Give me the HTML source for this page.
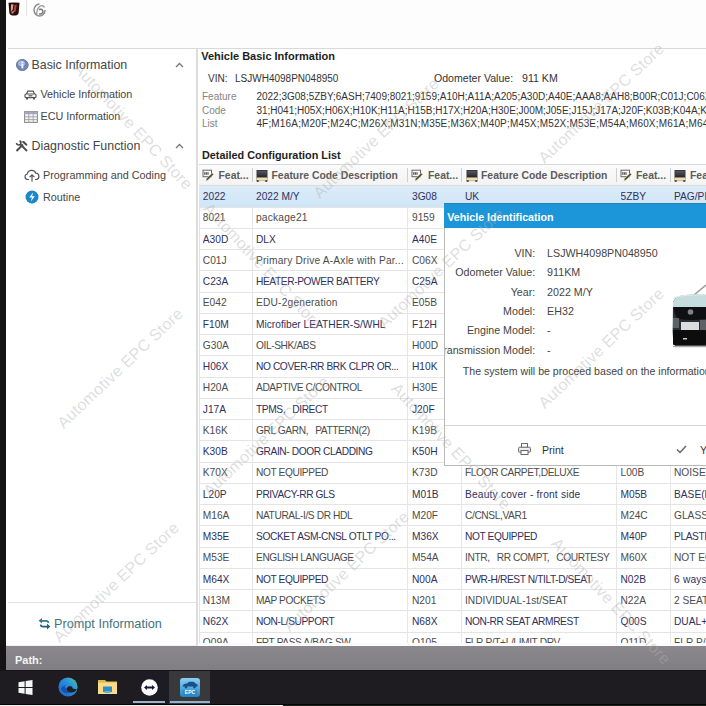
<!DOCTYPE html>
<html><head><meta charset="utf-8"><style>
html,body{margin:0;padding:0;}
body{width:706px;height:706px;position:relative;overflow:hidden;background:#fff;font-family:"Liberation Sans", sans-serif;}
.t{position:absolute;white-space:nowrap;}
</style></head><body>
<div style="position:absolute;left:0px;top:0px;width:6px;height:671px;background:#141414"></div>
<div style="position:absolute;left:6px;top:0px;width:700px;height:48.3px;background:#fdfdfd"></div>
<div style="position:absolute;left:8px;top:48px;width:698px;height:1px;background:#d9d9d9"></div>
<div style="position:absolute;left:6px;top:49px;width:191px;height:597px;background:#fff"></div>
<div style="position:absolute;left:196px;top:49px;width:2.2px;height:597px;background:#dcdcdc"></div>
<div style="position:absolute;left:199px;top:164px;width:1px;height:481px;background:#e2e2e2"></div>
<div style="position:absolute;left:6px;top:646px;width:700px;height:25px;background:linear-gradient(#8a888c,#848286 60%,#807e82)"></div>
<div style="position:absolute;left:6px;top:670px;width:700px;height:1.5px;background:#151416"></div>
<div style="position:absolute;left:6px;top:645px;width:191px;height:0.8px;background:#eee"></div>
<div class="t" style="left:15.00px;top:654.99px;font-size:11px;line-height:11px;color:#f4f4f4;font-weight:700;">Path:</div>
<div style="position:absolute;left:0px;top:670.8px;width:706px;height:32.8px;background:#1e1c20"></div>
<div style="position:absolute;left:0px;top:703.5px;width:706px;height:1px;background:#050505"></div>
<div style="position:absolute;left:0px;top:704.5px;width:283px;height:1.5px;background:#f2f2f2"></div>
<div style="position:absolute;left:283px;top:704.5px;width:423px;height:1.5px;background:#1b241e"></div>
<svg style="position:absolute;left:18px;top:679.5px" width="15" height="15" viewBox="0 0 15 15"><path d="M0.5 2.2 L6.6 1.3 V7 H0.5Z M7.6 1.1 L14.5 0.1 V7 H7.6Z M0.5 8 H6.6 V13.7 L0.5 12.8Z M7.6 8 H14.5 V14.9 L7.6 13.9Z" fill="#f6f6f6"/></svg>
<svg style="position:absolute;left:57.5px;top:676.8px" width="20" height="20" viewBox="0 0 20 20"><defs><linearGradient id="eg" x1="0" y1="1" x2="1" y2="0"><stop offset="0" stop-color="#1f5fc8"/><stop offset="0.6" stop-color="#2a8fe0"/><stop offset="1" stop-color="#4fd08a"/></linearGradient></defs><circle cx="10" cy="10" r="9.6" fill="url(#eg)"/><path d="M19 12 Q17 16 12.5 15.5 Q8.5 15 8.8 11.5 Q9.2 9 12 9 Q14.5 9.2 14.8 11.5 Q17 12.5 19 12Z" fill="#1f1e21"/><path d="M8.8 11.5 Q8.5 15 12.5 15.5 Q6 18 3 12 Q4 8.5 8 8.2 Q5 9.5 8.8 11.5Z" fill="#103a8a" opacity="0.6"/></svg>
<svg style="position:absolute;left:98.3px;top:679.3px" width="19" height="15" viewBox="0 0 19 15"><path d="M0 1 H7 L8.5 2.5 H19 V15 H0Z" fill="#e0b94c"/><rect x="0" y="3.5" width="19" height="11.5" fill="#f7dc8a"/><rect x="5" y="7.5" width="9" height="5.5" fill="#2f8fc4"/><rect x="6.5" y="12" width="6" height="2" fill="#5db2e0"/></svg>
<div style="position:absolute;left:136.5px;top:671px;width:32px;height:30.5px;background:#1d1c24"></div>
<svg style="position:absolute;left:140.5px;top:679px" width="17" height="17" viewBox="0 0 17 17"><circle cx="8.5" cy="8.5" r="8.3" fill="#fafafa"/><path d="M3 8.5 L6 6 V7.6 H11 V6 L14 8.5 L11 11 V9.4 H6 V11Z" fill="#141a3a"/></svg>
<div style="position:absolute;left:169px;top:671px;width:41.2px;height:32.5px;background:#39393b"></div>
<svg style="position:absolute;left:179.8px;top:677.6px" width="20" height="19" viewBox="0 0 20 19"><defs><linearGradient id="ag" x1="0" y1="0" x2="0" y2="1"><stop offset="0" stop-color="#8fd0f0"/><stop offset="1" stop-color="#1c86c8"/></linearGradient></defs><rect x="0" y="0" width="20" height="19" rx="3" fill="url(#ag)"/><path d="M2.5 8.5 Q3 5.5 7 5.5 L9 3.8 H13.5 L16 5.8 Q18 6 17.8 8.5Z" fill="#1a4f8a"/><circle cx="6" cy="9" r="1.4" fill="#1a4f8a"/><circle cx="14.5" cy="9" r="1.4" fill="#1a4f8a"/><rect x="3" y="12" width="14" height="4.5" fill="#2f7fc0" opacity="0.7"/><text x="10" y="16.2" font-size="5" text-anchor="middle" fill="#fff" font-family="Liberation Sans" font-weight="700">EPC</text></svg>
<div style="position:absolute;left:133px;top:701.4px;width:32px;height:1.7px;background:#9eb3c8"></div>
<div style="position:absolute;left:170px;top:701.4px;width:40px;height:1.7px;background:#92b2cf"></div>
<svg style="position:absolute;left:8px;top:1.5px" width="12" height="14" viewBox="0 0 12 14"><path d="M0.5 0.8 Q6 0 11.5 0.8 L10.6 11 Q10 13.6 6 13.6 Q2 13.6 1.4 11 Z" fill="#2a0907"/><path d="M3 2.5 L5.5 2.2 L4.6 8 L2.8 9.5Z" fill="#d9a89a"/><path d="M6.5 3 L8.8 2.6 L7.6 9.6 L5.2 11Z" fill="#9a4a3c"/><path d="M3.2 9.8 L6 8.8 L5.4 11.2 L3.6 11.8Z" fill="#c48878"/></svg>
<div style="position:absolute;left:26px;top:0px;width:1px;height:16px;background:#e2e2e2"></div>
<svg style="position:absolute;left:33px;top:2.5px" width="13" height="14" viewBox="0 0 13 14"><path d="M6.5 1 A5.5 6 0 1 0 12 7" fill="none" stroke="#8d8d8d" stroke-width="1.5"/><path d="M4 12 Q3 7 6.5 3.5 Q10 1.5 11.5 4.5" fill="none" stroke="#9a9a9a" stroke-width="1.3"/><path d="M6 6.5 Q9.5 5.5 10 8.5 Q9.5 11.5 6 11" fill="none" stroke="#777" stroke-width="1.4"/></svg>
<svg style="position:absolute;left:15.5px;top:58.8px" width="13" height="12" viewBox="0 0 13 12"><ellipse cx="6.3" cy="6" rx="5.9" ry="5.6" fill="#7088b8" stroke="#5b6c95" stroke-width="0.8"/><ellipse cx="5.5" cy="4.5" rx="3.5" ry="2.8" fill="#a8bbdf"/><rect x="5.4" y="5" width="1.9" height="4.4" fill="#f2f4fa"/><rect x="5.4" y="2.5" width="1.9" height="1.7" fill="#f2f4fa"/></svg>
<div class="t" style="left:31.50px;top:59.00px;font-size:12.4px;line-height:12.4px;color:#454545;font-weight:400;">Basic Information</div>
<svg style="position:absolute;left:174.5px;top:61.5px" width="9" height="6" viewBox="0 0 9 6"><path d="M1 5 L4.5 1.5 L8 5" fill="none" stroke="#777" stroke-width="1.3"/></svg>
<svg style="position:absolute;left:174.5px;top:142.5px" width="9" height="6" viewBox="0 0 9 6"><path d="M1 5 L4.5 1.5 L8 5" fill="none" stroke="#777" stroke-width="1.3"/></svg>
<svg style="position:absolute;left:24px;top:90px" width="13" height="10" viewBox="0 0 13 10"><path d="M2.5 4 L3.8 1.2 L9.2 1.2 L10.5 4" fill="none" stroke="#555" stroke-width="1.2"/><rect x="1" y="4" width="11" height="3.6" rx="1" fill="none" stroke="#555" stroke-width="1.2"/><rect x="2" y="7.5" width="2" height="2" fill="#555"/><rect x="9" y="7.5" width="2" height="2" fill="#555"/><rect x="4.5" y="5.2" width="4" height="1.2" fill="#555"/></svg>
<div class="t" style="left:40.50px;top:89.06px;font-size:10.8px;line-height:10.8px;color:#454545;font-weight:400;">Vehicle Information</div>
<svg style="position:absolute;left:24px;top:110.5px" width="14" height="12" viewBox="0 0 14 12"><rect x="0.6" y="0.6" width="12.8" height="10.8" fill="#f4f4f8" stroke="#888" stroke-width="1"/><rect x="0.6" y="0.6" width="12.8" height="2.6" fill="#a9a9c4"/><path d="M0.6 5.8 H13.4 M0.6 8.6 H13.4 M4.8 0.6 V11.4 M9.2 0.6 V11.4" stroke="#999" stroke-width="0.8"/></svg>
<div class="t" style="left:40.50px;top:110.96px;font-size:10.8px;line-height:10.8px;color:#454545;font-weight:400;">ECU Information</div>
<svg style="position:absolute;left:15px;top:139.5px" width="14" height="12" viewBox="0 0 14 12"><path d="M1.5 11 L8 4.5" stroke="#4a4a4a" stroke-width="2"/><path d="M6.5 1.5 L9 1 L12.5 4.5 L11.5 6 L8.5 3.5Z" fill="#4a4a4a"/><path d="M12 11 L5 4" stroke="#4a4a4a" stroke-width="1.8"/><path d="M1.5 3 A2.2 2.2 0 1 0 4.5 0.8" fill="none" stroke="#4a4a4a" stroke-width="1.6"/></svg>
<div class="t" style="left:31.50px;top:140.00px;font-size:12.4px;line-height:12.4px;color:#454545;font-weight:400;">Diagnostic Function</div>
<svg style="position:absolute;left:23.5px;top:168.5px" width="16" height="13" viewBox="0 0 16 13"><path d="M5 10.5 H3.5 A2.8 2.8 0 0 1 3.2 5 A4.5 4.5 0 0 1 11.8 4.2 A3.2 3.2 0 0 1 12.5 10.5 H11" fill="none" stroke="#555" stroke-width="1.2"/><path d="M8 12.5 V6 M5.6 8.2 L8 5.8 L10.4 8.2" fill="none" stroke="#555" stroke-width="1.2"/></svg>
<div class="t" style="left:43.00px;top:170.46px;font-size:10.8px;line-height:10.8px;color:#454545;font-weight:400;">Programming and Coding</div>
<svg style="position:absolute;left:24.5px;top:189.8px" width="14" height="14" viewBox="0 0 14 14"><circle cx="7" cy="7" r="6.5" fill="#1a87c8"/><path d="M8.2 2.2 L4.2 7.6 H7 L5.6 11.8 L9.8 6.2 H7.1 Z" fill="#fff"/></svg>
<div class="t" style="left:43.00px;top:191.56px;font-size:10.8px;line-height:10.8px;color:#454545;font-weight:400;">Routine</div>
<div style="position:absolute;left:8px;top:602px;width:189px;height:1px;background:#e1e1e1"></div>
<svg style="position:absolute;left:37.5px;top:616.5px" width="13" height="14" viewBox="0 0 13 14"><path d="M3 3.8 H8 Q10.2 3.8 10.5 5.8" fill="none" stroke="#2e7a90" stroke-width="1.7"/><path d="M0.6 3.8 L4 1 V6.6Z" fill="#2e7a90"/><path d="M2.6 7.6 Q2.9 9.6 5 9.6 H10" fill="none" stroke="#245f78" stroke-width="1.7"/><path d="M12.4 9.6 L9 6.8 V12.4Z" fill="#245f78"/></svg>
<div class="t" style="left:54.00px;top:618.45px;font-size:12.7px;line-height:12.7px;color:#3f7380;font-weight:400;">Prompt Information</div>
<div class="t" style="left:201.20px;top:51.09px;font-size:11px;line-height:11px;color:#1e1e1e;font-weight:700;">Vehicle Basic Information</div>
<div class="t" style="left:208.00px;top:73.83px;font-size:10px;line-height:10px;color:#333;font-weight:400;">VIN:</div>
<div class="t" style="left:235.00px;top:73.83px;font-size:10px;line-height:10px;color:#333;font-weight:400;">LSJWH4098PN048950</div>
<div class="t" style="left:433.90px;top:73.33px;font-size:10.6px;line-height:10.6px;color:#333;font-weight:400;">Odometer Value:&nbsp;&nbsp; 911 KM</div>
<div class="t" style="left:202.00px;top:92.23px;font-size:10px;line-height:10px;color:#858585;font-weight:400;">Feature</div>
<div class="t" style="left:256.40px;top:92.23px;font-size:10px;line-height:10px;color:#333;font-weight:400;">2022;3G08;5ZBY;6ASH;7409;8021;9159;A10H;A11A;A205;A30D;A40E;AAA8;AAH8;B00R;C01J;C06X;C0</div>
<div class="t" style="left:202.00px;top:105.83px;font-size:10px;line-height:10px;color:#858585;font-weight:400;">Code</div>
<div class="t" style="left:256.40px;top:105.83px;font-size:10px;line-height:10px;color:#333;font-weight:400;">31;H041;H05X;H06X;H10K;H11A;H15B;H17X;H20A;H30E;J00M;J05E;J15J;J17A;J20F;K03B;K04A;K13</div>
<div class="t" style="left:202.00px;top:119.44px;font-size:10px;line-height:10px;color:#858585;font-weight:400;">List</div>
<div class="t" style="left:256.40px;top:119.44px;font-size:10px;line-height:10px;color:#333;font-weight:400;letter-spacing:0.17px">4F;M16A;M20F;M24C;M26X;M31N;M35E;M36X;M40P;M45X;M52X;M53E;M54A;M60X;M61A;M64X;N00A</div>
<div class="t" style="left:202.00px;top:150.02px;font-size:10.85px;line-height:10.85px;color:#1e1e1e;font-weight:700;">Detailed Configuration List</div>
<div style="position:absolute;left:198.5px;top:164.2px;width:508px;height:21.80000000000001px;background:linear-gradient(#fbfbfb,#f3f3f3);border-top:1px solid #d8d8d8;border-bottom:1px solid #dcdcdc;box-sizing:border-box"></div>
<div style="position:absolute;left:252px;top:168.2px;width:1px;height:13.800000000000011px;background:#cfcfcf"></div>
<div style="position:absolute;left:407px;top:168.2px;width:1px;height:13.800000000000011px;background:#cfcfcf"></div>
<div style="position:absolute;left:461px;top:168.2px;width:1px;height:13.800000000000011px;background:#cfcfcf"></div>
<div style="position:absolute;left:616px;top:168.2px;width:1px;height:13.800000000000011px;background:#cfcfcf"></div>
<div style="position:absolute;left:670px;top:168.2px;width:1px;height:13.800000000000011px;background:#cfcfcf"></div>
<svg style="position:absolute;left:202px;top:169px" width="13" height="13" viewBox="0 0 13 13"><rect x="1" y="1.2" width="8.5" height="6.5" fill="#fafafa" stroke="#666" stroke-width="1"/><path d="M2.8 3.2 v2.6 M4.3 3.2 v2.6 M6 3.2 v2.6" stroke="#333" stroke-width="1"/><path d="M3.8 12 L4.6 9.6 L10.2 4 L11.6 5.4 L6 11Z" fill="#4d4d34" stroke="#e8e6b0" stroke-width="0.5"/></svg>
<div class="t" style="left:218.50px;top:170.90px;font-size:10.4px;line-height:10.4px;color:#5c5c5c;font-weight:700;">Feat...</div>
<svg style="position:absolute;left:256.3px;top:170px" width="12" height="12" viewBox="0 0 12 12"><defs><linearGradient id="scr" x1="0" y1="0" x2="0" y2="1"><stop offset="0" stop-color="#5a5a66"/><stop offset="1" stop-color="#1e1e28"/></linearGradient></defs><rect x="1" y="0.5" width="10" height="7.5" fill="url(#scr)" stroke="#3a3a3a" stroke-width="1"/><rect x="0.3" y="7.6" width="11.4" height="3" rx="0.8" fill="#efe2b4" stroke="#9a8a5a" stroke-width="0.5"/><rect x="0.6" y="10.3" width="2.2" height="1.5" rx="0.5" fill="#222"/><rect x="9.2" y="10.3" width="2.2" height="1.5" rx="0.5" fill="#222"/></svg>
<div class="t" style="left:271.50px;top:170.90px;font-size:10.4px;line-height:10.4px;color:#5c5c5c;font-weight:700;">Feature Code Description</div>
<svg style="position:absolute;left:411px;top:169px" width="13" height="13" viewBox="0 0 13 13"><rect x="1" y="1.2" width="8.5" height="6.5" fill="#fafafa" stroke="#666" stroke-width="1"/><path d="M2.8 3.2 v2.6 M4.3 3.2 v2.6 M6 3.2 v2.6" stroke="#333" stroke-width="1"/><path d="M3.8 12 L4.6 9.6 L10.2 4 L11.6 5.4 L6 11Z" fill="#4d4d34" stroke="#e8e6b0" stroke-width="0.5"/></svg>
<div class="t" style="left:428.00px;top:170.90px;font-size:10.4px;line-height:10.4px;color:#5c5c5c;font-weight:700;">Feat...</div>
<svg style="position:absolute;left:465.5px;top:170px" width="12" height="12" viewBox="0 0 12 12"><defs><linearGradient id="scr" x1="0" y1="0" x2="0" y2="1"><stop offset="0" stop-color="#5a5a66"/><stop offset="1" stop-color="#1e1e28"/></linearGradient></defs><rect x="1" y="0.5" width="10" height="7.5" fill="url(#scr)" stroke="#3a3a3a" stroke-width="1"/><rect x="0.3" y="7.6" width="11.4" height="3" rx="0.8" fill="#efe2b4" stroke="#9a8a5a" stroke-width="0.5"/><rect x="0.6" y="10.3" width="2.2" height="1.5" rx="0.5" fill="#222"/><rect x="9.2" y="10.3" width="2.2" height="1.5" rx="0.5" fill="#222"/></svg>
<div class="t" style="left:481.00px;top:170.90px;font-size:10.4px;line-height:10.4px;color:#5c5c5c;font-weight:700;">Feature Code Description</div>
<svg style="position:absolute;left:620px;top:169px" width="13" height="13" viewBox="0 0 13 13"><rect x="1" y="1.2" width="8.5" height="6.5" fill="#fafafa" stroke="#666" stroke-width="1"/><path d="M2.8 3.2 v2.6 M4.3 3.2 v2.6 M6 3.2 v2.6" stroke="#333" stroke-width="1"/><path d="M3.8 12 L4.6 9.6 L10.2 4 L11.6 5.4 L6 11Z" fill="#4d4d34" stroke="#e8e6b0" stroke-width="0.5"/></svg>
<div class="t" style="left:636.00px;top:170.90px;font-size:10.4px;line-height:10.4px;color:#5c5c5c;font-weight:700;">Feat...</div>
<svg style="position:absolute;left:674px;top:170px" width="12" height="12" viewBox="0 0 12 12"><defs><linearGradient id="scr" x1="0" y1="0" x2="0" y2="1"><stop offset="0" stop-color="#5a5a66"/><stop offset="1" stop-color="#1e1e28"/></linearGradient></defs><rect x="1" y="0.5" width="10" height="7.5" fill="url(#scr)" stroke="#3a3a3a" stroke-width="1"/><rect x="0.3" y="7.6" width="11.4" height="3" rx="0.8" fill="#efe2b4" stroke="#9a8a5a" stroke-width="0.5"/><rect x="0.6" y="10.3" width="2.2" height="1.5" rx="0.5" fill="#222"/><rect x="9.2" y="10.3" width="2.2" height="1.5" rx="0.5" fill="#222"/></svg>
<div class="t" style="left:690.00px;top:170.90px;font-size:10.4px;line-height:10.4px;color:#5c5c5c;font-weight:700;">Feature Code Description</div>
<div style="position:absolute;left:198.5px;top:186.0px;width:508px;height:457.30px;overflow:hidden">
<div style="position:absolute;left:0px;top:0px;width:508px;height:21.25px;background:linear-gradient(#dcecf9,#cfe5f7)"></div>
<div style="position:absolute;left:0;top:20.65px;width:508px;height:1.1px;background:#e4e4e4"></div>
<div style="position:absolute;left:0;top:41.90px;width:508px;height:1.1px;background:#e4e4e4"></div>
<div style="position:absolute;left:0;top:63.15px;width:508px;height:1.1px;background:#e4e4e4"></div>
<div style="position:absolute;left:0;top:84.40px;width:508px;height:1.1px;background:#e4e4e4"></div>
<div style="position:absolute;left:0;top:105.65px;width:508px;height:1.1px;background:#e4e4e4"></div>
<div style="position:absolute;left:0;top:126.90px;width:508px;height:1.1px;background:#e4e4e4"></div>
<div style="position:absolute;left:0;top:148.15px;width:508px;height:1.1px;background:#e4e4e4"></div>
<div style="position:absolute;left:0;top:169.40px;width:508px;height:1.1px;background:#e4e4e4"></div>
<div style="position:absolute;left:0;top:190.65px;width:508px;height:1.1px;background:#e4e4e4"></div>
<div style="position:absolute;left:0;top:211.90px;width:508px;height:1.1px;background:#e4e4e4"></div>
<div style="position:absolute;left:0;top:233.15px;width:508px;height:1.1px;background:#e4e4e4"></div>
<div style="position:absolute;left:0;top:254.40px;width:508px;height:1.1px;background:#e4e4e4"></div>
<div style="position:absolute;left:0;top:275.65px;width:508px;height:1.1px;background:#e4e4e4"></div>
<div style="position:absolute;left:0;top:296.90px;width:508px;height:1.1px;background:#e4e4e4"></div>
<div style="position:absolute;left:0;top:318.15px;width:508px;height:1.1px;background:#e4e4e4"></div>
<div style="position:absolute;left:0;top:339.40px;width:508px;height:1.1px;background:#e4e4e4"></div>
<div style="position:absolute;left:0;top:360.65px;width:508px;height:1.1px;background:#e4e4e4"></div>
<div style="position:absolute;left:0;top:381.90px;width:508px;height:1.1px;background:#e4e4e4"></div>
<div style="position:absolute;left:0;top:403.15px;width:508px;height:1.1px;background:#e4e4e4"></div>
<div style="position:absolute;left:0;top:424.40px;width:508px;height:1.1px;background:#e4e4e4"></div>
<div style="position:absolute;left:0;top:445.65px;width:508px;height:1.1px;background:#e4e4e4"></div>
<div style="position:absolute;left:0;top:466.90px;width:508px;height:1.1px;background:#e4e4e4"></div>
<div style="position:absolute;left:53.0px;top:21.25px;width:1px;height:600px;background:#e6e6e6"></div>
<div style="position:absolute;left:208.0px;top:21.25px;width:1px;height:600px;background:#e6e6e6"></div>
<div style="position:absolute;left:262.0px;top:21.25px;width:1px;height:600px;background:#e6e6e6"></div>
<div style="position:absolute;left:417.0px;top:21.25px;width:1px;height:600px;background:#e6e6e6"></div>
<div style="position:absolute;left:471.0px;top:21.25px;width:1px;height:600px;background:#e6e6e6"></div>
<div class="t" style="letter-spacing:0;left:4.30px;width:48.2px;overflow:hidden;top:4.17px;font-size:10.2px;line-height:13.2px;height:13.2px;color:#30305c">2022</div>
<div class="t" style="letter-spacing:0;left:57.50px;width:150.0px;overflow:hidden;top:4.17px;font-size:10.2px;line-height:13.2px;height:13.2px;color:#30305c">2022 M/Y</div>
<div class="t" style="letter-spacing:0;left:213.50px;width:48.0px;overflow:hidden;top:4.17px;font-size:10.2px;line-height:13.2px;height:13.2px;color:#30305c">3G08</div>
<div class="t" style="letter-spacing:0;left:266.50px;width:150.0px;overflow:hidden;top:4.17px;font-size:10.2px;line-height:13.2px;height:13.2px;color:#30305c">UK</div>
<div class="t" style="letter-spacing:0;left:422.00px;width:48.5px;overflow:hidden;top:4.17px;font-size:10.2px;line-height:13.2px;height:13.2px;color:#30305c">5ZBY</div>
<div class="t" style="letter-spacing:0;left:475.50px;width:85.0px;overflow:hidden;top:4.17px;font-size:10.2px;line-height:13.2px;height:13.2px;color:#30305c">PAG/PE</div>
<div class="t" style="letter-spacing:0;left:4.30px;width:48.2px;overflow:hidden;top:25.42px;font-size:10.2px;line-height:13.2px;height:13.2px;color:#4c4c4c">8021</div>
<div class="t" style="letter-spacing:0.2px;left:57.50px;width:150.0px;overflow:hidden;top:25.42px;font-size:10.2px;line-height:13.2px;height:13.2px;color:#4c4c4c">package21</div>
<div class="t" style="letter-spacing:0;left:213.50px;width:48.0px;overflow:hidden;top:25.42px;font-size:10.2px;line-height:13.2px;height:13.2px;color:#4c4c4c">9159</div>
<div class="t" style="letter-spacing:0;left:4.30px;width:48.2px;overflow:hidden;top:46.67px;font-size:10.2px;line-height:13.2px;height:13.2px;color:#30305c">A30D</div>
<div class="t" style="letter-spacing:0;left:57.50px;width:150.0px;overflow:hidden;top:46.67px;font-size:10.2px;line-height:13.2px;height:13.2px;color:#30305c">DLX</div>
<div class="t" style="letter-spacing:0;left:213.50px;width:48.0px;overflow:hidden;top:46.67px;font-size:10.2px;line-height:13.2px;height:13.2px;color:#30305c">A40E</div>
<div class="t" style="letter-spacing:0;left:4.30px;width:48.2px;overflow:hidden;top:67.92px;font-size:10.2px;line-height:13.2px;height:13.2px;color:#4c4c4c">C01J</div>
<div class="t" style="letter-spacing:0.2px;left:57.50px;width:150.0px;overflow:hidden;top:67.92px;font-size:10.2px;line-height:13.2px;height:13.2px;color:#4c4c4c">Primary Drive A-Axle with Par...</div>
<div class="t" style="letter-spacing:0;left:213.50px;width:48.0px;overflow:hidden;top:67.92px;font-size:10.2px;line-height:13.2px;height:13.2px;color:#4c4c4c">C06X</div>
<div class="t" style="letter-spacing:0;left:4.30px;width:48.2px;overflow:hidden;top:89.17px;font-size:10.2px;line-height:13.2px;height:13.2px;color:#30305c">C23A</div>
<div class="t" style="letter-spacing:-0.4px;left:57.50px;width:150.0px;overflow:hidden;top:89.17px;font-size:10.2px;line-height:13.2px;height:13.2px;color:#30305c">HEATER-POWER BATTERY</div>
<div class="t" style="letter-spacing:0;left:213.50px;width:48.0px;overflow:hidden;top:89.17px;font-size:10.2px;line-height:13.2px;height:13.2px;color:#30305c">C25A</div>
<div class="t" style="letter-spacing:0;left:4.30px;width:48.2px;overflow:hidden;top:110.42px;font-size:10.2px;line-height:13.2px;height:13.2px;color:#4c4c4c">E042</div>
<div class="t" style="letter-spacing:0.2px;left:57.50px;width:150.0px;overflow:hidden;top:110.42px;font-size:10.2px;line-height:13.2px;height:13.2px;color:#4c4c4c">EDU-2generation</div>
<div class="t" style="letter-spacing:0;left:213.50px;width:48.0px;overflow:hidden;top:110.42px;font-size:10.2px;line-height:13.2px;height:13.2px;color:#4c4c4c">E05B</div>
<div class="t" style="letter-spacing:0;left:4.30px;width:48.2px;overflow:hidden;top:131.67px;font-size:10.2px;line-height:13.2px;height:13.2px;color:#30305c">F10M</div>
<div class="t" style="letter-spacing:0;left:57.50px;width:150.0px;overflow:hidden;top:131.67px;font-size:10.2px;line-height:13.2px;height:13.2px;color:#30305c">Microfiber LEATHER-S/WHL</div>
<div class="t" style="letter-spacing:0;left:213.50px;width:48.0px;overflow:hidden;top:131.67px;font-size:10.2px;line-height:13.2px;height:13.2px;color:#30305c">F12H</div>
<div class="t" style="letter-spacing:0;left:4.30px;width:48.2px;overflow:hidden;top:152.92px;font-size:10.2px;line-height:13.2px;height:13.2px;color:#4c4c4c">G30A</div>
<div class="t" style="letter-spacing:-0.4px;left:57.50px;width:150.0px;overflow:hidden;top:152.92px;font-size:10.2px;line-height:13.2px;height:13.2px;color:#4c4c4c">OIL-SHK/ABS</div>
<div class="t" style="letter-spacing:0;left:213.50px;width:48.0px;overflow:hidden;top:152.92px;font-size:10.2px;line-height:13.2px;height:13.2px;color:#4c4c4c">H00D</div>
<div class="t" style="letter-spacing:0;left:4.30px;width:48.2px;overflow:hidden;top:174.17px;font-size:10.2px;line-height:13.2px;height:13.2px;color:#30305c">H06X</div>
<div class="t" style="letter-spacing:-0.4px;left:57.50px;width:150.0px;overflow:hidden;top:174.17px;font-size:10.2px;line-height:13.2px;height:13.2px;color:#30305c">NO COVER-RR BRK CLPR OR...</div>
<div class="t" style="letter-spacing:0;left:213.50px;width:48.0px;overflow:hidden;top:174.17px;font-size:10.2px;line-height:13.2px;height:13.2px;color:#30305c">H10K</div>
<div class="t" style="letter-spacing:0;left:4.30px;width:48.2px;overflow:hidden;top:195.42px;font-size:10.2px;line-height:13.2px;height:13.2px;color:#4c4c4c">H20A</div>
<div class="t" style="letter-spacing:-0.4px;left:57.50px;width:150.0px;overflow:hidden;top:195.42px;font-size:10.2px;line-height:13.2px;height:13.2px;color:#4c4c4c">ADAPTIVE C/CONTROL</div>
<div class="t" style="letter-spacing:0;left:213.50px;width:48.0px;overflow:hidden;top:195.42px;font-size:10.2px;line-height:13.2px;height:13.2px;color:#4c4c4c">H30E</div>
<div class="t" style="letter-spacing:0;left:4.30px;width:48.2px;overflow:hidden;top:216.67px;font-size:10.2px;line-height:13.2px;height:13.2px;color:#30305c">J17A</div>
<div class="t" style="letter-spacing:-0.4px;left:57.50px;width:150.0px;overflow:hidden;top:216.67px;font-size:10.2px;line-height:13.2px;height:13.2px;color:#30305c">TPMS,&ensp;&nbsp;DIRECT</div>
<div class="t" style="letter-spacing:0;left:213.50px;width:48.0px;overflow:hidden;top:216.67px;font-size:10.2px;line-height:13.2px;height:13.2px;color:#30305c">J20F</div>
<div class="t" style="letter-spacing:0;left:4.30px;width:48.2px;overflow:hidden;top:237.92px;font-size:10.2px;line-height:13.2px;height:13.2px;color:#4c4c4c">K16K</div>
<div class="t" style="letter-spacing:-0.4px;left:57.50px;width:150.0px;overflow:hidden;top:237.92px;font-size:10.2px;line-height:13.2px;height:13.2px;color:#4c4c4c">GRL GARN,&ensp;&nbsp;PATTERN(2)</div>
<div class="t" style="letter-spacing:0;left:213.50px;width:48.0px;overflow:hidden;top:237.92px;font-size:10.2px;line-height:13.2px;height:13.2px;color:#4c4c4c">K19B</div>
<div class="t" style="letter-spacing:0;left:4.30px;width:48.2px;overflow:hidden;top:259.17px;font-size:10.2px;line-height:13.2px;height:13.2px;color:#30305c">K30B</div>
<div class="t" style="letter-spacing:-0.4px;left:57.50px;width:150.0px;overflow:hidden;top:259.17px;font-size:10.2px;line-height:13.2px;height:13.2px;color:#30305c">GRAIN- DOOR CLADDING</div>
<div class="t" style="letter-spacing:0;left:213.50px;width:48.0px;overflow:hidden;top:259.17px;font-size:10.2px;line-height:13.2px;height:13.2px;color:#30305c">K50H</div>
<div class="t" style="letter-spacing:0;left:4.30px;width:48.2px;overflow:hidden;top:280.42px;font-size:10.2px;line-height:13.2px;height:13.2px;color:#4c4c4c">K70X</div>
<div class="t" style="letter-spacing:-0.4px;left:57.50px;width:150.0px;overflow:hidden;top:280.42px;font-size:10.2px;line-height:13.2px;height:13.2px;color:#4c4c4c">NOT EQUIPPED</div>
<div class="t" style="letter-spacing:0;left:213.50px;width:48.0px;overflow:hidden;top:280.42px;font-size:10.2px;line-height:13.2px;height:13.2px;color:#4c4c4c">K73D</div>
<div class="t" style="letter-spacing:-0.4px;left:266.50px;width:150.0px;overflow:hidden;top:280.42px;font-size:10.2px;line-height:13.2px;height:13.2px;color:#4c4c4c">FLOOR CARPET,DELUXE</div>
<div class="t" style="letter-spacing:0;left:422.00px;width:48.5px;overflow:hidden;top:280.42px;font-size:10.2px;line-height:13.2px;height:13.2px;color:#4c4c4c">L00B</div>
<div class="t" style="letter-spacing:0;left:475.50px;width:85.0px;overflow:hidden;top:280.42px;font-size:10.2px;line-height:13.2px;height:13.2px;color:#4c4c4c">NOISE</div>
<div class="t" style="letter-spacing:0;left:4.30px;width:48.2px;overflow:hidden;top:301.67px;font-size:10.2px;line-height:13.2px;height:13.2px;color:#30305c">L20P</div>
<div class="t" style="letter-spacing:-0.4px;left:57.50px;width:150.0px;overflow:hidden;top:301.67px;font-size:10.2px;line-height:13.2px;height:13.2px;color:#30305c">PRIVACY-RR GLS</div>
<div class="t" style="letter-spacing:0;left:213.50px;width:48.0px;overflow:hidden;top:301.67px;font-size:10.2px;line-height:13.2px;height:13.2px;color:#30305c">M01B</div>
<div class="t" style="letter-spacing:0.2px;left:266.50px;width:150.0px;overflow:hidden;top:301.67px;font-size:10.2px;line-height:13.2px;height:13.2px;color:#30305c">Beauty cover - front side</div>
<div class="t" style="letter-spacing:0;left:422.00px;width:48.5px;overflow:hidden;top:301.67px;font-size:10.2px;line-height:13.2px;height:13.2px;color:#30305c">M05B</div>
<div class="t" style="letter-spacing:0;left:475.50px;width:85.0px;overflow:hidden;top:301.67px;font-size:10.2px;line-height:13.2px;height:13.2px;color:#30305c">BASE(D</div>
<div class="t" style="letter-spacing:0;left:4.30px;width:48.2px;overflow:hidden;top:322.92px;font-size:10.2px;line-height:13.2px;height:13.2px;color:#4c4c4c">M16A</div>
<div class="t" style="letter-spacing:-0.4px;left:57.50px;width:150.0px;overflow:hidden;top:322.92px;font-size:10.2px;line-height:13.2px;height:13.2px;color:#4c4c4c">NATURAL-I/S DR HDL</div>
<div class="t" style="letter-spacing:0;left:213.50px;width:48.0px;overflow:hidden;top:322.92px;font-size:10.2px;line-height:13.2px;height:13.2px;color:#4c4c4c">M20F</div>
<div class="t" style="letter-spacing:-0.4px;left:266.50px;width:150.0px;overflow:hidden;top:322.92px;font-size:10.2px;line-height:13.2px;height:13.2px;color:#4c4c4c">C/CNSL,VAR1</div>
<div class="t" style="letter-spacing:0;left:422.00px;width:48.5px;overflow:hidden;top:322.92px;font-size:10.2px;line-height:13.2px;height:13.2px;color:#4c4c4c">M24C</div>
<div class="t" style="letter-spacing:0;left:475.50px;width:85.0px;overflow:hidden;top:322.92px;font-size:10.2px;line-height:13.2px;height:13.2px;color:#4c4c4c">GLASS</div>
<div class="t" style="letter-spacing:0;left:4.30px;width:48.2px;overflow:hidden;top:344.17px;font-size:10.2px;line-height:13.2px;height:13.2px;color:#30305c">M35E</div>
<div class="t" style="letter-spacing:-0.4px;left:57.50px;width:150.0px;overflow:hidden;top:344.17px;font-size:10.2px;line-height:13.2px;height:13.2px;color:#30305c">SOCKET ASM-CNSL OTLT PO...</div>
<div class="t" style="letter-spacing:0;left:213.50px;width:48.0px;overflow:hidden;top:344.17px;font-size:10.2px;line-height:13.2px;height:13.2px;color:#30305c">M36X</div>
<div class="t" style="letter-spacing:-0.4px;left:266.50px;width:150.0px;overflow:hidden;top:344.17px;font-size:10.2px;line-height:13.2px;height:13.2px;color:#30305c">NOT EQUIPPED</div>
<div class="t" style="letter-spacing:0;left:422.00px;width:48.5px;overflow:hidden;top:344.17px;font-size:10.2px;line-height:13.2px;height:13.2px;color:#30305c">M40P</div>
<div class="t" style="letter-spacing:-0.4px;left:475.50px;width:85.0px;overflow:hidden;top:344.17px;font-size:10.2px;line-height:13.2px;height:13.2px;color:#30305c">PLASTI</div>
<div class="t" style="letter-spacing:0;left:4.30px;width:48.2px;overflow:hidden;top:365.42px;font-size:10.2px;line-height:13.2px;height:13.2px;color:#4c4c4c">M53E</div>
<div class="t" style="letter-spacing:-0.4px;left:57.50px;width:150.0px;overflow:hidden;top:365.42px;font-size:10.2px;line-height:13.2px;height:13.2px;color:#4c4c4c">ENGLISH LANGUAGE</div>
<div class="t" style="letter-spacing:0;left:213.50px;width:48.0px;overflow:hidden;top:365.42px;font-size:10.2px;line-height:13.2px;height:13.2px;color:#4c4c4c">M54A</div>
<div class="t" style="letter-spacing:-0.4px;left:266.50px;width:150.0px;overflow:hidden;top:365.42px;font-size:10.2px;line-height:13.2px;height:13.2px;color:#4c4c4c">INTR,&ensp;&nbsp;RR COMPT,&ensp;&nbsp;COURTESY</div>
<div class="t" style="letter-spacing:0;left:422.00px;width:48.5px;overflow:hidden;top:365.42px;font-size:10.2px;line-height:13.2px;height:13.2px;color:#4c4c4c">M60X</div>
<div class="t" style="letter-spacing:0;left:475.50px;width:85.0px;overflow:hidden;top:365.42px;font-size:10.2px;line-height:13.2px;height:13.2px;color:#4c4c4c">NOT EQ</div>
<div class="t" style="letter-spacing:0;left:4.30px;width:48.2px;overflow:hidden;top:386.67px;font-size:10.2px;line-height:13.2px;height:13.2px;color:#30305c">M64X</div>
<div class="t" style="letter-spacing:-0.4px;left:57.50px;width:150.0px;overflow:hidden;top:386.67px;font-size:10.2px;line-height:13.2px;height:13.2px;color:#30305c">NOT EQUIPPED</div>
<div class="t" style="letter-spacing:0;left:213.50px;width:48.0px;overflow:hidden;top:386.67px;font-size:10.2px;line-height:13.2px;height:13.2px;color:#30305c">N00A</div>
<div class="t" style="letter-spacing:-0.4px;left:266.50px;width:150.0px;overflow:hidden;top:386.67px;font-size:10.2px;line-height:13.2px;height:13.2px;color:#30305c">PWR-H/REST N/TILT-D/SEAT</div>
<div class="t" style="letter-spacing:0;left:422.00px;width:48.5px;overflow:hidden;top:386.67px;font-size:10.2px;line-height:13.2px;height:13.2px;color:#30305c">N02B</div>
<div class="t" style="letter-spacing:0.2px;left:475.50px;width:85.0px;overflow:hidden;top:386.67px;font-size:10.2px;line-height:13.2px;height:13.2px;color:#30305c">6 ways</div>
<div class="t" style="letter-spacing:0;left:4.30px;width:48.2px;overflow:hidden;top:407.92px;font-size:10.2px;line-height:13.2px;height:13.2px;color:#4c4c4c">N13M</div>
<div class="t" style="letter-spacing:-0.4px;left:57.50px;width:150.0px;overflow:hidden;top:407.92px;font-size:10.2px;line-height:13.2px;height:13.2px;color:#4c4c4c">MAP POCKETS</div>
<div class="t" style="letter-spacing:0;left:213.50px;width:48.0px;overflow:hidden;top:407.92px;font-size:10.2px;line-height:13.2px;height:13.2px;color:#4c4c4c">N201</div>
<div class="t" style="letter-spacing:0;left:266.50px;width:150.0px;overflow:hidden;top:407.92px;font-size:10.2px;line-height:13.2px;height:13.2px;color:#4c4c4c">INDIVIDUAL-1st/SEAT</div>
<div class="t" style="letter-spacing:0;left:422.00px;width:48.5px;overflow:hidden;top:407.92px;font-size:10.2px;line-height:13.2px;height:13.2px;color:#4c4c4c">N22A</div>
<div class="t" style="letter-spacing:0;left:475.50px;width:85.0px;overflow:hidden;top:407.92px;font-size:10.2px;line-height:13.2px;height:13.2px;color:#4c4c4c">2 SEAT</div>
<div class="t" style="letter-spacing:0;left:4.30px;width:48.2px;overflow:hidden;top:429.17px;font-size:10.2px;line-height:13.2px;height:13.2px;color:#30305c">N62X</div>
<div class="t" style="letter-spacing:-0.4px;left:57.50px;width:150.0px;overflow:hidden;top:429.17px;font-size:10.2px;line-height:13.2px;height:13.2px;color:#30305c">NON-L/SUPPORT</div>
<div class="t" style="letter-spacing:0;left:213.50px;width:48.0px;overflow:hidden;top:429.17px;font-size:10.2px;line-height:13.2px;height:13.2px;color:#30305c">N68X</div>
<div class="t" style="letter-spacing:-0.4px;left:266.50px;width:150.0px;overflow:hidden;top:429.17px;font-size:10.2px;line-height:13.2px;height:13.2px;color:#30305c">NON-RR SEAT ARMREST</div>
<div class="t" style="letter-spacing:0;left:422.00px;width:48.5px;overflow:hidden;top:429.17px;font-size:10.2px;line-height:13.2px;height:13.2px;color:#30305c">Q00S</div>
<div class="t" style="letter-spacing:0;left:475.50px;width:85.0px;overflow:hidden;top:429.17px;font-size:10.2px;line-height:13.2px;height:13.2px;color:#30305c">DUAL+</div>
<div class="t" style="letter-spacing:0;left:4.30px;width:48.2px;overflow:hidden;top:450.42px;font-size:10.2px;line-height:13.2px;height:13.2px;color:#4c4c4c">O09A</div>
<div class="t" style="letter-spacing:-0.4px;left:57.50px;width:150.0px;overflow:hidden;top:450.42px;font-size:10.2px;line-height:13.2px;height:13.2px;color:#4c4c4c">FRT PASS A/BAG SW</div>
<div class="t" style="letter-spacing:0;left:213.50px;width:48.0px;overflow:hidden;top:450.42px;font-size:10.2px;line-height:13.2px;height:13.2px;color:#4c4c4c">O105</div>
<div class="t" style="letter-spacing:-0.4px;left:266.50px;width:150.0px;overflow:hidden;top:450.42px;font-size:10.2px;line-height:13.2px;height:13.2px;color:#4c4c4c">FLR P/T+L/LIMIT-DRV</div>
<div class="t" style="letter-spacing:0;left:422.00px;width:48.5px;overflow:hidden;top:450.42px;font-size:10.2px;line-height:13.2px;height:13.2px;color:#4c4c4c">O11D</div>
<div class="t" style="letter-spacing:0;left:475.50px;width:85.0px;overflow:hidden;top:450.42px;font-size:10.2px;line-height:13.2px;height:13.2px;color:#4c4c4c">FLR P/C</div>
</div>
<div style="position:absolute;left:198.5px;top:643.3px;width:508px;height:2.7px;background:#fbfbfb"></div>
<div style="position:absolute;left:444px;top:203.3px;width:280px;height:262.8px;background:#fff;border:1px solid #b9b9b9;box-sizing:border-box"></div>
<div style="position:absolute;left:444px;top:203.3px;width:280px;height:24.7px;background:#1c96d8;border-top:1px solid #2f7fa8;box-sizing:border-box"></div>
<div class="t" style="left:447.30px;top:212.44px;font-size:10.7px;line-height:10.7px;color:#fff;font-weight:700;">Vehicle Identification</div>
<div style="position:absolute;left:445px;top:228px;width:120px;height:140px;overflow:hidden">
<div class="t" style="left:-209.80px;width:300px;text-align:right;top:20.14px;font-size:10.7px;line-height:10.7px;color:#444">VIN:</div>
<div class="t" style="left:-209.80px;width:300px;text-align:right;top:38.54px;font-size:10.7px;line-height:10.7px;color:#444">Odometer Value:</div>
<div class="t" style="left:-209.80px;width:300px;text-align:right;top:58.94px;font-size:10.7px;line-height:10.7px;color:#444">Year:</div>
<div class="t" style="left:-209.80px;width:300px;text-align:right;top:78.44px;font-size:10.7px;line-height:10.7px;color:#444">Model:</div>
<div class="t" style="left:-209.80px;width:300px;text-align:right;top:97.14px;font-size:10.7px;line-height:10.7px;color:#444">Engine Model:</div>
<div class="t" style="left:-209.80px;width:300px;text-align:right;top:117.24px;font-size:10.7px;line-height:10.7px;color:#444">Transmission Model:</div>
</div>
<div class="t" style="left:547.10px;top:248.14px;font-size:10.7px;line-height:10.7px;color:#444;font-weight:400;">LSJWH4098PN048950</div>
<div class="t" style="left:547.10px;top:266.54px;font-size:10.7px;line-height:10.7px;color:#444;font-weight:400;">911KM</div>
<div class="t" style="left:547.10px;top:286.94px;font-size:10.7px;line-height:10.7px;color:#444;font-weight:400;">2022 M/Y</div>
<div class="t" style="left:547.10px;top:306.44px;font-size:10.7px;line-height:10.7px;color:#444;font-weight:400;">EH32</div>
<div class="t" style="left:547.10px;top:325.14px;font-size:10.7px;line-height:10.7px;color:#444;font-weight:400;">-</div>
<div class="t" style="left:547.10px;top:345.24px;font-size:10.7px;line-height:10.7px;color:#444;font-weight:400;">-</div>
<div class="t" style="left:462.80px;top:365.73px;font-size:10.6px;line-height:10.6px;color:#444;font-weight:400;">The system will be proceed based on the information</div>
<div style="position:absolute;left:445px;top:425px;width:270px;height:1px;background:#d4d4d4"></div>
<svg style="position:absolute;left:518px;top:442.5px" width="13" height="12" viewBox="0 0 13 12"><rect x="3.5" y="0.6" width="6" height="4" fill="#fff" stroke="#666" stroke-width="1"/><rect x="0.6" y="4.2" width="11.8" height="5" rx="1" fill="#eee" stroke="#666" stroke-width="1"/><rect x="3" y="7.5" width="7" height="4" fill="#fff" stroke="#666" stroke-width="1"/></svg>
<div class="t" style="left:542.00px;top:444.73px;font-size:10.6px;line-height:10.6px;color:#333;font-weight:400;">Print</div>
<svg style="position:absolute;left:675.5px;top:445px" width="11" height="9" viewBox="0 0 11 9"><path d="M1 4.5 L4 7.5 L10 1" fill="none" stroke="#666" stroke-width="1.5"/></svg>
<div class="t" style="left:700.00px;top:444.73px;font-size:10.6px;line-height:10.6px;color:#333;font-weight:400;">Yes</div>
<svg style="position:absolute;left:672px;top:284px" width="34" height="66" viewBox="0 0 34 66"><path d="M22 11 L34 1" stroke="#9a9a9a" stroke-width="1.6"/><path d="M1 18 Q3 12 14 11 L34 10 L34 62 L3 62 Q0 55 0.8 40 Z" fill="#2a3036"/><path d="M1 18 Q3 12 14 11 L34 10 L34 23 L1 23 Z" fill="#c6dde0"/><path d="M1 14.5 Q8 11 20 11 L34 10.5" stroke="#e6eeee" stroke-width="1" fill="none"/><path d="M1.5 23 H34 V35 Q20 37 6 35 Q2 30 1.5 23Z" fill="#0e1013"/><circle cx="18.5" cy="28" r="2.8" fill="#7d8388"/><rect x="1" y="34" width="6" height="10" fill="#5d6266"/><rect x="9" y="38" width="18" height="8" fill="#dcdcdc"/><rect x="28" y="36" width="6" height="10" fill="#5d6266"/><rect x="1" y="46" width="33" height="15" rx="1" fill="#0d0d0e"/><rect x="11" y="54" width="4" height="1.5" fill="#ccc"/><path d="M1 62.5 H34" stroke="#aaa" stroke-width="1.5"/></svg>
<div class="t" style="left:64px;top:416.46px;font-size:16px;line-height:16px;letter-spacing:0.3px;color:rgba(175,175,175,0.42);transform-origin:0 13.54px;transform:rotate(-43.5deg)">Automotive EPC Store</div>
<div class="t" style="left:60px;top:630.46px;font-size:16px;line-height:16px;letter-spacing:0.3px;color:rgba(175,175,175,0.42);transform-origin:0 13.54px;transform:rotate(-43.5deg)">Automotive EPC Store</div>
<div class="t" style="left:210px;top:484.46px;font-size:16px;line-height:16px;letter-spacing:0.3px;color:rgba(175,175,175,0.42);transform-origin:0 13.54px;transform:rotate(-43.5deg)">Automotive EPC Store</div>
<div class="t" style="left:290px;top:619.46px;font-size:16px;line-height:16px;letter-spacing:0.3px;color:rgba(175,175,175,0.42);transform-origin:0 13.54px;transform:rotate(-43.5deg)">Automotive EPC Store</div>
<div class="t" style="left:320px;top:186.46px;font-size:16px;line-height:16px;letter-spacing:0.3px;color:rgba(175,175,175,0.42);transform-origin:0 13.54px;transform:rotate(-43.5deg)">Automotive EPC Store</div>
<div class="t" style="left:545px;top:151.46px;font-size:16px;line-height:16px;letter-spacing:0.3px;color:rgba(175,175,175,0.42);transform-origin:0 13.54px;transform:rotate(-43.5deg)">Automotive EPC Store</div>
<div class="t" style="left:385px;top:316.46px;font-size:16px;line-height:16px;letter-spacing:0.3px;color:rgba(175,175,175,0.42);transform-origin:0 13.54px;transform:rotate(-43.5deg)">Automotive EPC Store</div>
<div class="t" style="left:545px;top:396.46px;font-size:16px;line-height:16px;letter-spacing:0.3px;color:rgba(175,175,175,0.42);transform-origin:0 13.54px;transform:rotate(-43.5deg)">Automotive EPC Store</div>
<div class="t" style="left:72px;top:56.46px;font-size:16px;line-height:16px;letter-spacing:0.3px;color:rgba(175,175,175,0.42);transform-origin:0 13.54px;transform:rotate(47deg)">Automotive EPC Store</div>
<div class="t" style="left:202px;top:196.46px;font-size:16px;line-height:16px;letter-spacing:0.3px;color:rgba(175,175,175,0.42);transform-origin:0 13.54px;transform:rotate(47deg)">Automotive EPC Store</div>
<div class="t" style="left:390px;top:376.46px;font-size:16px;line-height:16px;letter-spacing:0.3px;color:rgba(175,175,175,0.42);transform-origin:0 13.54px;transform:rotate(47deg)">Automotive EPC Store</div>
<div class="t" style="left:550px;top:531.46px;font-size:16px;line-height:16px;letter-spacing:0.3px;color:rgba(175,175,175,0.42);transform-origin:0 13.54px;transform:rotate(47deg)">Automotive EPC Store</div>
</body></html>
